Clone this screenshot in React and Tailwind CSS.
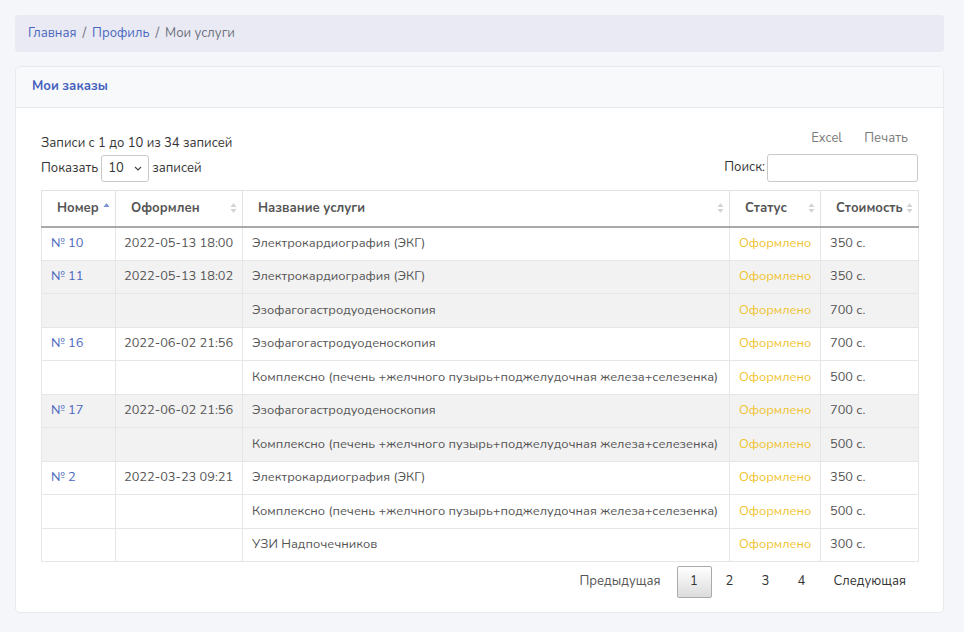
import React from "react";

const rows = [
  { id: "№ 10", date: "2022-05-13 18:00", items: [["Электрокардиография (ЭКГ)", "350 с."]] },
  {
    id: "№ 11",
    date: "2022-05-13 18:02",
    items: [
      ["Электрокардиография (ЭКГ)", "350 с."],
      ["Эзофагогастродуоденоскопия", "700 с."],
    ],
  },
  {
    id: "№ 16",
    date: "2022-06-02 21:56",
    items: [
      ["Эзофагогастродуоденоскопия", "700 с."],
      ["Комплексно (печень +желчного пузырь+поджелудочная железа+селезенка)", "500 с."],
    ],
  },
  {
    id: "№ 17",
    date: "2022-06-02 21:56",
    items: [
      ["Эзофагогастродуоденоскопия", "700 с."],
      ["Комплексно (печень +желчного пузырь+поджелудочная железа+селезенка)", "500 с."],
    ],
  },
  {
    id: "№ 2",
    date: "2022-03-23 09:21",
    items: [
      ["Электрокардиография (ЭКГ)", "350 с."],
      ["Комплексно (печень +желчного пузырь+поджелудочная железа+селезенка)", "500 с."],
      ["УЗИ Надпочечников", "300 с."],
    ],
  },
];

const SortIcon = ({ active }) => (
  <svg width="7" height="11" viewBox="0 0 7 11" className="absolute right-[5px] top-1/2 -translate-y-1/2">
    <path d="M3.5 0.5 L6.5 4.5 L0.5 4.5 Z" fill={active ? "#7b8fd6" : "#d4d4d4"} />
    {!active && <path d="M3.5 10.5 L6.5 6.5 L0.5 6.5 Z" fill="#d4d4d4" />}
  </svg>
);

const headers = [
  { title: "Номер", w: "w-[74px]", active: true },
  { title: "Оформлен", w: "w-[127px]" },
  { title: "Название услуги", w: "w-[487px]" },
  { title: "Статус", w: "w-[91px]" },
  { title: "Стоимость", w: "w-[98px]" },
];

export default function App() {
  return (
    <div className="min-h-[632px] bg-[#f5f6f9] pl-[15px] pr-[20px] pt-[15px] pb-[20px] text-[13px] text-[#333] font-['Nunito','Noto_Sans','Open_Sans',sans-serif]">
      {/* Breadcrumb */}
      <div className="h-[37px] rounded-[4px] bg-[#e9eaf3] px-[13px] flex items-center gap-[6px] text-[13px]">
        <a className="text-[#4a67c0]">Главная</a>
        <span className="text-[#6c6f7c]">/</span>
        <a className="text-[#4a67c0]">Профиль</a>
        <span className="text-[#6c6f7c]">/</span>
        <span className="text-[#6c6f7c]">Мои услуги</span>
      </div>

      {/* Card */}
      <div className="mt-[14px] rounded-[5px] border border-[#e8eaef] bg-white overflow-hidden">
        <div className="h-[41px] bg-[#f8f9fb] border-b border-[#e6e8ee] px-[16px] flex items-center">
          <h3 className="font-bold text-[#4562bd] text-[13px]">Мои заказы</h3>
        </div>

        <div className="px-[25px] pt-[21px] pb-[14px]">
          <div className="flex justify-between">
            <div>
              <div className="h-[20px] flex items-center mt-[5px]">Записи с 1 до 10 из 34 записей</div>
              <div className="flex items-center gap-[3px] mt-[1px]">
                <span>Показать</span>
                <div className="w-[48px] h-[27px] border border-[#c9c9c9] rounded-[3px] flex items-center justify-between px-[6px]">
                  <span>10</span>
                  <svg width="8" height="5" viewBox="0 0 8 5"><path d="M1 1 L4 4 L7 1" fill="none" stroke="#444" strokeWidth="1.1" /></svg>
                </div>
                <span>записей</span>
              </div>
            </div>
            <div className="flex flex-col items-end">
              <div className="flex gap-[22px] text-[#7a7a7a] pr-[10px]">
                <span>Excel</span>
                <span>Печать</span>
              </div>
              <div className="flex items-center gap-[2px] mt-[5px]">
                <span>Поиск:</span>
                <div className="w-[151px] h-[28px] border border-[#c9c9c9] rounded-[3px]" />
              </div>
            </div>
          </div>

          <table className="mt-[8px] w-full border-collapse table-fixed">
            <thead>
              <tr className="h-[36px]">
                {headers.map((h) => (
                  <th
                    key={h.title}
                    className={`${h.w} relative text-left font-bold text-[#555] pl-[15px] border border-[#e2e2e2] border-b-2 border-b-[#a9a9a9]`}
                  >
                    {h.title}
                    <SortIcon active={h.active} />
                  </th>
                ))}
              </tr>
            </thead>
            <tbody className="text-[#555] text-[12.8px]">
              {rows.map((order, oi) =>
                order.items.map((item, ii) => (
                  <tr
                    key={`${oi}-${ii}`}
                    className={`h-[33.5px] ${oi % 2 === 1 ? "bg-[#f2f2f2]" : "bg-white"} ${
                      oi === rows.length - 1 && ii === order.items.length - 1 ? "border-b border-b-[#8a8a8a]" : ""
                    }`}
                  >
                    <td className="pl-[9px] border border-[#e6e6e6] text-[#4a67c0]">{ii === 0 ? order.id : ""}</td>
                    <td className="pl-[8px] border border-[#e6e6e6]">{ii === 0 ? order.date : ""}</td>
                    <td className="pl-[9px] border border-[#e6e6e6] whitespace-nowrap">{item[0]}</td>
                    <td className="pl-[9px] border border-[#e6e6e6] text-[#f0c330]">Оформлено</td>
                    <td className="pl-[9px] border border-[#e6e6e6]">{item[1]}</td>
                  </tr>
                ))
              )}
            </tbody>
          </table>

          <div className="flex justify-end items-center mt-[4px] pr-[12px]">
            <span className="px-[16px] text-[#555]">Предыдущая</span>
            <span className="w-[35px] h-[32px] flex items-center justify-center border border-[#aaa] rounded-[2px] bg-gradient-to-b from-white to-[#dcdcdc] text-[#333]">1</span>
            <span className="w-[36px] text-center">2</span>
            <span className="w-[36px] text-center">3</span>
            <span className="w-[36px] text-center">4</span>
            <span className="pl-[14px]">Следующая</span>
          </div>
        </div>
      </div>
    </div>
  );
}
